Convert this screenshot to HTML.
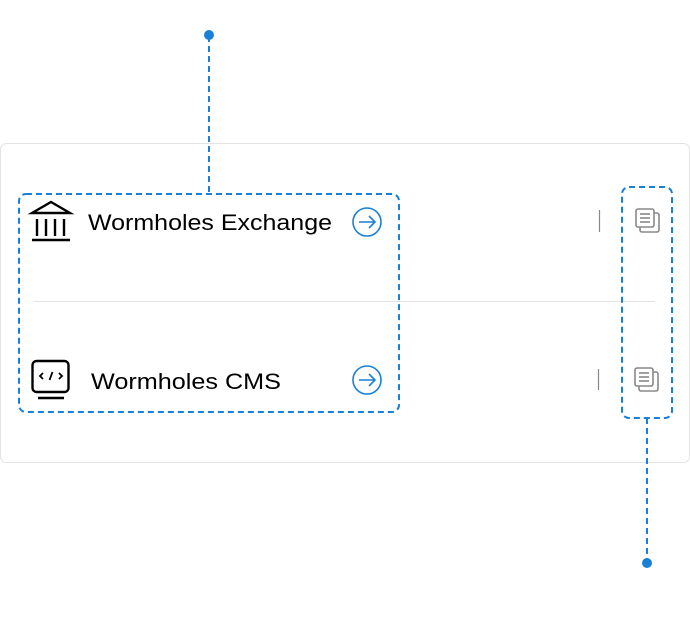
<!DOCTYPE html>
<html><head><style>
body{margin:0;width:690px;height:630px;background:#fff;overflow:hidden;font-family:"Liberation Sans",sans-serif}
</style></head><body>
<svg width="690" height="630" xmlns="http://www.w3.org/2000/svg">
<rect x="0.5" y="143.5" width="689" height="319" rx="6" fill="#fff" stroke="#e3e3e3"/>
<line x1="34" y1="301.5" x2="655" y2="301.5" stroke="#e3e3e3"/>
<g stroke="#000" stroke-width="2.4" fill="none">
<path d="M32 213 L51 202 L70 213 Z"/>
<line x1="37" y1="219" x2="37" y2="236"/><line x1="46" y1="219" x2="46" y2="236"/>
<line x1="55" y1="219" x2="55" y2="236"/><line x1="64" y1="219" x2="64" y2="236"/>
<line x1="32" y1="240" x2="70" y2="240"/>
<rect x="32.5" y="361" width="36" height="31" rx="4"/>
<line x1="38" y1="398" x2="64" y2="398"/>
</g>
<g stroke="#000" stroke-width="1.8" fill="none">
<path d="M43 373 L40 376 L43 379"/><path d="M59 373 L62 376 L59 379"/><path d="M52.5 372 L49.5 380"/>
</g>
<text x="88" y="230" font-size="22" fill="#000" textLength="244" lengthAdjust="spacingAndGlyphs">Wormholes Exchange</text>
<text x="91" y="389" font-size="22" fill="#000" textLength="190" lengthAdjust="spacingAndGlyphs">Wormholes CMS</text>
<g stroke="#1a7fd6" stroke-width="1.6" fill="none">
<circle cx="367" cy="222" r="14"/><path d="M359 222 H375 M369 216 L375 222 L369 228"/>
<circle cx="367" cy="380" r="14"/><path d="M359 380 H375 M369 374 L375 380 L369 386"/>
</g>
<line x1="599.5" y1="210" x2="599.5" y2="232" stroke="#888" stroke-width="1.2"/>
<line x1="598.5" y1="369" x2="598.5" y2="390" stroke="#888" stroke-width="1.2"/>
<g stroke="#888" stroke-width="1.6" fill="#fff">
<rect x="640" y="213" width="19" height="19" rx="2"/><rect x="636" y="209" width="18" height="18" rx="2"/>
<line x1="640" y1="214" x2="650" y2="214"/><line x1="640" y1="218" x2="650" y2="218"/><line x1="640" y1="222" x2="650" y2="222"/>
<rect x="639" y="372" width="19" height="19" rx="2"/><rect x="635" y="368" width="18" height="18" rx="2"/>
<line x1="639" y1="373" x2="649" y2="373"/><line x1="639" y1="377" x2="649" y2="377"/><line x1="639" y1="381" x2="649" y2="381"/>
</g>
<g stroke="#1a7fd6" stroke-width="2" fill="none" stroke-dasharray="6 4">
<rect x="19" y="194" width="380" height="218" rx="7"/>
<rect x="622" y="187" width="50" height="231" rx="7"/>
<line x1="209" y1="36" x2="209" y2="194"/>
<line x1="647" y1="418" x2="647" y2="562"/>
</g>
<circle cx="209" cy="35" r="5" fill="#1a7fd6"/>
<circle cx="647" cy="563" r="5" fill="#1a7fd6"/>
</svg>
</body></html>
